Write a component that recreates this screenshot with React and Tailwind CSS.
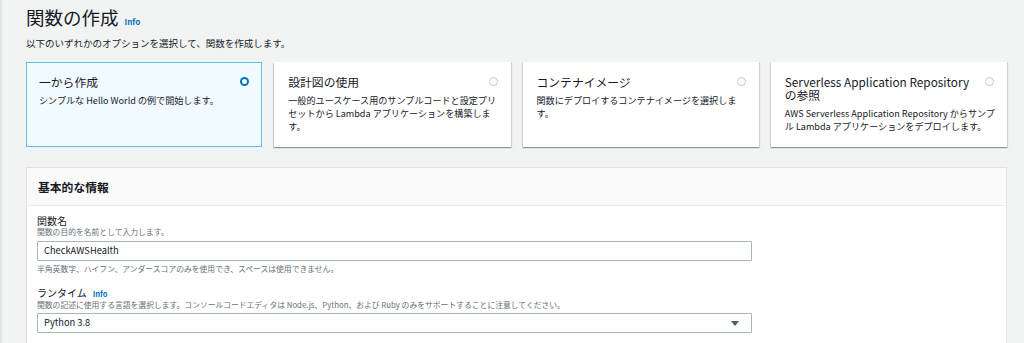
export default function App() {
  const font = { fontFamily: '"Noto Sans CJK JP", "Noto Sans", sans-serif' };
  const cards = [
    {
      title: "一から作成",
      desc: "シンプルな Hello World の例で開始します。",
      selected: true,
    },
    {
      title: "設計図の使用",
      desc: "一般的ユースケース用のサンプルコードと設定プリセットから Lambda アプリケーションを構築します。",
    },
    {
      title: "コンテナイメージ",
      desc: "関数にデプロイするコンテナイメージを選択します。",
    },
    {
      title: "Serverless Application Repository の参照",
      desc: "AWS Serverless Application Repository からサンプル Lambda アプリケーションをデプロイします。",
    },
  ];

  return (
    <div
      className="h-[343px] w-[1024px] overflow-hidden bg-[#f2f3f3] border-l-2 border-[#e1e4e4] text-[#16191f]"
      style={font}
    >
      <div className="pl-[24px] pr-[17px]">
        {/* Header */}
        <div className="flex items-baseline gap-[6px] pt-[6px]">
          <h1 className="text-[18.5px] leading-[23px] font-normal text-[#16191f]">関数の作成</h1>
          <span className="text-[8px] font-bold text-[#0073bb]">Info</span>
        </div>
        <p className="mt-[7px] text-[9.5px] leading-[14px] text-[#16191f]">
          以下のいずれかのオプションを選択して、関数を作成します。
        </p>

        {/* Option cards */}
        <div className="mt-[12px] grid grid-cols-4 gap-[12px]">
          {cards.map((c) => (
            <div
              key={c.title}
              className={
                c.selected
                  ? "h-[85px] border border-[#5fbfdc] bg-[#f1faff] pl-[12px] pr-[12px] pt-[12px]"
                  : "h-[85px] border border-transparent bg-white shadow-[0_1px_1px_0_rgba(0,28,36,0.25),1px_1px_1px_0_rgba(0,28,36,0.12),-1px_1px_1px_0_rgba(0,28,36,0.12)] pl-[13px] pr-[12px] pt-[12px]"
              }
            >
              <div className="flex items-start justify-between">
                <div className="text-[11.8px] leading-[13px] text-[#16191f] pr-[6px]">{c.title}</div>
                {c.selected ? (
                  <span className="mt-[2px] h-[9px] w-[9px] shrink-0 rounded-full border-[2.5px] border-[#0073bb] bg-white" />
                ) : (
                  <span className="mt-[2px] h-[9px] w-[9px] shrink-0 rounded-full border border-[#c6c8ca] bg-white" />
                )}
              </div>
              <p className="mt-[6px] mr-[-1px] text-[9.1px] leading-[13px] text-[#16191f]">{c.desc}</p>
            </div>
          ))}
        </div>

        {/* Basic info panel */}
        <div className="mt-[20px] bg-white border border-[#dfe3e3] border-b-0">
          <div className="h-[38px] border-b border-[#eaeded] bg-[#fafafa] px-[11px] flex items-center">
            <h2 className="text-[11.8px] font-bold text-[#16191f]">基本的な情報</h2>
          </div>
          <div className="px-[10px] pt-[9px] pb-[12px]">
            <div className="text-[10px] leading-[12px] text-[#16191f]">関数名</div>
            <div className="text-[7.8px] leading-[10px] text-[#687078]">関数の目的を名前として入力します。</div>
            <div className="mt-[4px] w-[715px] h-[20px] border border-[#aab7b8] rounded-[1px] flex items-center px-[6px] text-[9.3px] text-[#16191f]">
              CheckAWSHealth
            </div>
            <div className="mt-[3px] text-[7.8px] leading-[10px] text-[#687078]">
              半角英数字、ハイフン、アンダースコアのみを使用でき、スペースは使用できません。
            </div>

            <div className="mt-[13px] flex items-baseline gap-[6px]">
              <span className="text-[10px] leading-[12px] text-[#16191f]">ランタイム</span>
              <span className="text-[7.5px] font-bold text-[#0073bb]">Info</span>
            </div>
            <div className="mt-[1px] text-[7.8px] leading-[10px] text-[#687078]">
              関数の記述に使用する言語を選択します。コンソールコードエディタは Node.js、Python、および Ruby のみをサポートすることに注意してください。
            </div>
            <div className="mt-[3px] w-[715px] h-[20px] border border-[#aab7b8] rounded-[1px] flex items-center justify-between px-[6px] text-[9.3px] text-[#16191f]">
              <span>Python 3.8</span>
              <svg width="8" height="5" viewBox="0 0 8 5" className="mr-[6px]">
                <path d="M0 0 H8 L4 5 Z" fill="#545b64" />
              </svg>
            </div>
          </div>
        </div>
      </div>
    </div>
  );
}
